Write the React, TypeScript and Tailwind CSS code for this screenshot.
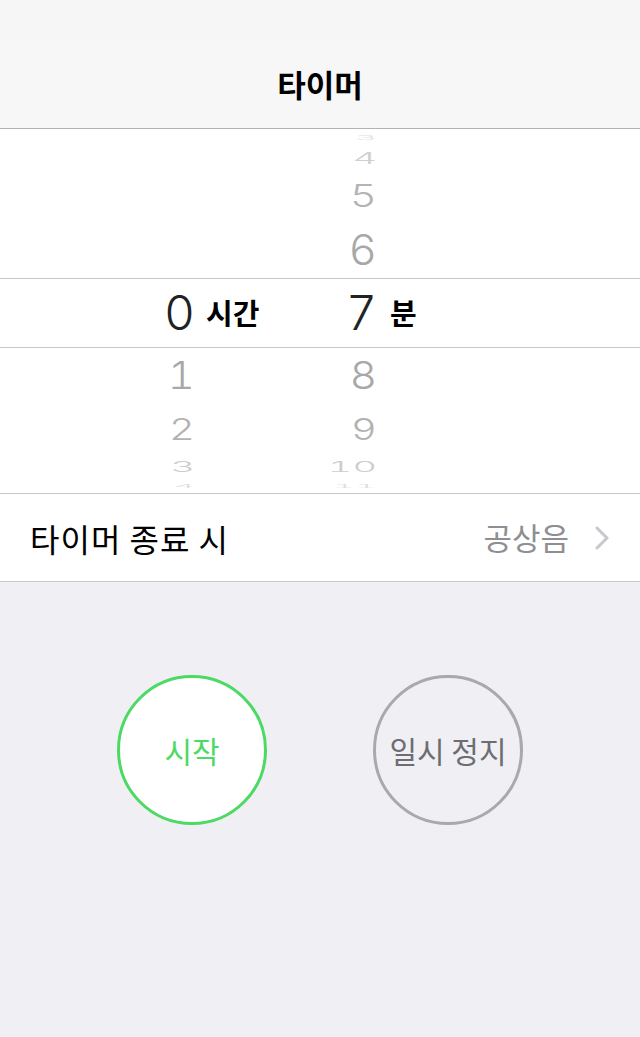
const kr = "font-['Noto_Sans_CJK_KR',sans-serif]";
const num = "font-['Inter',sans-serif] font-light leading-none tabular-nums";

type Cell = { v: string; h: string; cls: string };

// wheel rows above / below the selection band
const topMinutes: Cell[] = [
  { v: "3", h: "h-[17px]", cls: "text-[34px] scale-y-[0.18] text-[#e2e2e2]" },
  { v: "4", h: "h-[24px]", cls: "text-[38px] scale-y-[0.4] text-[#cfcfcf]" },
  { v: "5", h: "h-[51px]", cls: "text-[42px] scale-y-[0.75] text-[#b4b4b4]" },
  { v: "6", h: "h-[57px]", cls: "text-[44px] scale-y-[0.95] text-[#a8a8a8]" },
];

const bottomRows: { h: string; hour: string; min: string; cls: string }[] = [
  { h: "h-[54px]", hour: "1", min: "8", cls: "text-[42px] scale-y-[0.9] text-[#a8a8a8]" },
  { h: "h-[54px]", hour: "2", min: "9", cls: "text-[40px] scale-y-[0.75] text-[#b2b2b2]" },
  { h: "h-[22px]", hour: "3", min: "10", cls: "text-[38px] scale-y-[0.38] text-[#cdcdcd]" },
  { h: "h-[15px]", hour: "4", min: "11", cls: "text-[34px] scale-y-[0.14] text-[#e0e0e0]" },
];

export default function App() {
  return (
    <div className="w-[640px] h-[1037px] bg-[#efeff4] flex flex-col">
      {/* status + nav bar */}
      <div className="h-[40px] bg-[#f6f6f6]" />
      <div className="h-[89px] bg-[#f7f7f7] border-b border-[#b2b2b2] flex items-center justify-center">
        <span className={`${kr} text-[31px] font-bold text-black`}>타이머</span>
      </div>

      {/* picker */}
      <div className="bg-white flex flex-col">
        <div className="h-[149px] flex">
          <div className="w-[195px]" />
          <div className="w-[182px] flex flex-col">
            {topMinutes.map((c) => (
              <div key={c.v} className={`${c.h} flex items-center justify-end overflow-visible`}>
                <span className={`${num} ${c.cls}`}>{c.v}</span>
              </div>
            ))}
          </div>
        </div>

        <div className="h-[70px] border-y border-[#c8c8c8] flex items-center">
          <div className="w-[195px] text-right">
            <span className={`${num} text-[48px] text-[#222]`}>0</span>
          </div>
          <div className="w-[50px] shrink-0 pl-[11px] whitespace-nowrap">
            <span className={`${kr} text-[29px] font-bold text-black`}>시간</span>
          </div>
          <div className="w-[132px] text-right">
            <span className={`${num} text-[48px] text-[#222]`}>7</span>
          </div>
          <div className="pl-[13px]">
            <span className={`${kr} text-[29px] font-bold text-black`}>분</span>
          </div>
        </div>

        <div className="h-[145px] flex flex-col">
          {bottomRows.map((r) => (
            <div key={r.min} className={`${r.h} flex`}>
              <div className="w-[195px] flex items-center justify-end">
                <span className={`${num} ${r.cls}`}>{r.hour}</span>
              </div>
              <div className="w-[182px] flex items-center justify-end">
                <span className={`${num} ${r.cls}`}>{r.min}</span>
              </div>
            </div>
          ))}
        </div>
      </div>

      {/* sound row */}
      <div className="h-[89px] bg-white border-y border-[#c8c7cc] flex items-center pl-[30px] pr-[31px]">
        <span className={`${kr} text-[32px] tracking-[1px] text-black flex-1`}>타이머 종료 시</span>
        <span className={`${kr} text-[31px] text-[#8e8e93]`}>공상음</span>
        <svg className="ml-[26px]" width="14" height="24" viewBox="0 0 14 24" fill="none">
          <polyline points="2,2 12,12 2,22" stroke="#c7c7cc" strokeWidth="3" strokeLinecap="round" strokeLinejoin="round" />
        </svg>
      </div>

      {/* buttons */}
      <div className="pt-[93px] flex justify-center gap-[106px]">
        <div className="w-[150px] h-[150px] rounded-full bg-white border-[3px] border-[#4cd964] flex items-center justify-center">
          <span className={`${kr} text-[30px] text-[#4cd964]`}>시작</span>
        </div>
        <div className="w-[150px] h-[150px] rounded-full border-[3px] border-[#a8a8ad] flex items-center justify-center">
          <span className={`${kr} text-[30px] text-[#6d6d72] whitespace-nowrap`}>일시 정지</span>
        </div>
      </div>
    </div>
  );
}
